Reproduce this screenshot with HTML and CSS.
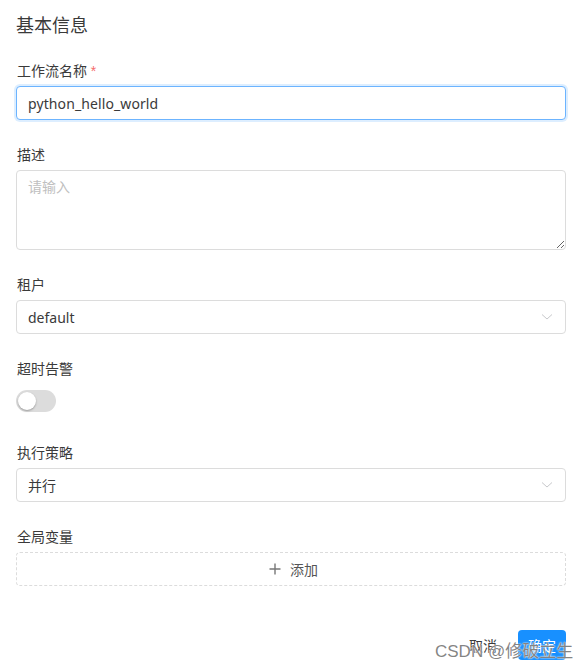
FILE: index.html
```html
<!DOCTYPE html>
<html lang="zh">
<head>
<meta charset="utf-8">
<link rel="stylesheet" href="styles.css">
</head>
<body>
<div class="panel">
  <div class="title">基本信息</div>
  <form class="form">
    <div class="item">
      <label class="label">工作流名称 <span class="req">*</span></label>
      <div class="control">
        <input class="input focused" type="text" value="python_hello_world">
      </div>
    </div>
    <div class="item">
      <label class="label">描述</label>
      <textarea class="textarea" placeholder="请输入"></textarea>
    </div>
    <div class="item">
      <label class="label">租户</label>
      <div class="select">
        <span class="select-value">default</span>
        <svg class="arrow" width="12" height="8" viewBox="0 0 12 8"><path d="M1 1.5 L6 6 L11 1.5" fill="none" stroke="#c8c9cc" stroke-width="1"/></svg>
      </div>
    </div>
    <div class="item">
      <label class="label">超时告警</label>
      <div class="control switch-row">
        <span class="switch"><span class="knob"></span></span>
      </div>
    </div>
    <div class="item">
      <label class="label">执行策略</label>
      <div class="select">
        <span class="select-value">并行</span>
        <svg class="arrow" width="12" height="8" viewBox="0 0 12 8"><path d="M1 1.5 L6 6 L11 1.5" fill="none" stroke="#c8c9cc" stroke-width="1"/></svg>
      </div>
    </div>
    <div class="item">
      <label class="label">全局变量</label>
      <div class="add-box">
        <svg class="plus" width="12" height="12" viewBox="0 0 12 12"><path d="M6 0.5 V11.5 M0.5 6 H11.5" stroke="#777" stroke-width="1.4" fill="none"/></svg>
        <span>添加</span>
      </div>
    </div>
  </form>
  <div class="footer">
    <button class="btn btn-text" type="button">取消</button>
    <button class="btn btn-primary" type="button">确定</button>
  </div>
</div>
<div class="watermark">CSDN @修破立生</div>
</body>
</html>
```
FILE: styles.css
```css
html, body {
  margin: 0;
  padding: 0;
  background: #fff;
}
body {
  font-family: "Noto Sans", "Noto Sans CJK SC", sans-serif;
  color: #3a3a3a;
  font-size: 14px;
  width: 587px;
  height: 671px;
  overflow: hidden;
  position: relative;
}
.panel {
  padding: 13px 21px 0 16px;
}
.title {
  font-size: 18px;
  line-height: 24px;
  color: #3a3a3a;
  margin-bottom: 23px;
}
.form {
  display: flex;
  flex-direction: column;
}
.item {
  display: flex;
  flex-direction: column;
  margin-bottom: 24px;
}
.label {
  display: block;
  font-size: 14px;
  line-height: 22px;
  height: 22px;
  color: #3a3a3a;
  margin-bottom: 4px;
  padding-left: 1px;
}
.req {
  color: #f56c6c;
  font-family: "Liberation Sans", sans-serif;
}
.control {
  display: flex;
  align-items: center;
  height: 34px;
}
.input {
  box-sizing: border-box;
  width: 100%;
  height: 34px;
  border: 1px solid #d9d9d9;
  border-radius: 4px;
  padding: 0 11px;
  font-family: "Noto Sans", "Noto Sans CJK SC", sans-serif;
  font-size: 14px;
  letter-spacing: 0.1px;
  color: #3a3a3a;
  outline: none;
  background: #fff;
}
.input.focused {
  border-color: #6cb4ff;
  box-shadow: 0 0 0 2px rgba(24, 144, 255, 0.15);
}
.textarea {
  box-sizing: border-box;
  width: 100%;
  height: 80px;
  border: 1px solid #dcdcdc;
  border-radius: 4px;
  padding: 6px 11px;
  font-family: "Noto Sans", "Noto Sans CJK SC", sans-serif;
  font-size: 14px;
  line-height: 20px;
  color: #3a3a3a;
  outline: none;
  resize: vertical;
  display: block;
  margin: 0;
}
.textarea::placeholder {
  color: #c0c0c0;
}
.select {
  box-sizing: border-box;
  height: 34px;
  border: 1px solid #dcdcdc;
  border-radius: 4px;
  padding: 0 11px;
  display: flex;
  align-items: center;
  justify-content: space-between;
  color: #3a3a3a;
}
.arrow {
  margin-right: 1px;
}
.switch-row {
  align-items: center;
}
.switch {
  box-sizing: border-box;
  width: 40px;
  height: 22px;
  border-radius: 11px;
  background: #dcdcdc;
  display: flex;
  align-items: center;
  padding: 0 2px;
}
.knob {
  width: 18px;
  height: 18px;
  border-radius: 50%;
  background: #fff;
  box-shadow: 0 1px 2px rgba(0, 0, 0, 0.3);
}
.add-box {
  box-sizing: border-box;
  height: 34px;
  border: 1px dashed #dcdcdc;
  border-radius: 4px;
  display: flex;
  align-items: center;
  justify-content: center;
  gap: 9px;
  color: #555;
  padding-left: 5px;
}
.footer {
  display: flex;
  justify-content: flex-end;
  align-items: center;
  gap: 8px;
  margin-top: 20px;
}
.btn {
  font-family: "Noto Sans", "Noto Sans CJK SC", sans-serif;
  font-size: 14px;
  height: 30px;
  border-radius: 4px;
  border: none;
  cursor: pointer;
}
.btn-text {
  background: transparent;
  color: #3a3a3a;
  padding: 0 13px;
}
.btn-primary {
  background: #1890ff;
  color: #fff;
  padding: 0 10px;
  width: 48px;
}
.watermark {
  position: absolute;
  left: 435px;
  top: 641px;
  font-family: "Liberation Sans", "Noto Sans CJK SC", sans-serif;
  font-size: 17px;
  line-height: 22px;
  color: rgba(110, 110, 110, 0.85);
  text-shadow: 0 0 1px #fff, 0 0 2px #fff;
  white-space: nowrap;
}
```
